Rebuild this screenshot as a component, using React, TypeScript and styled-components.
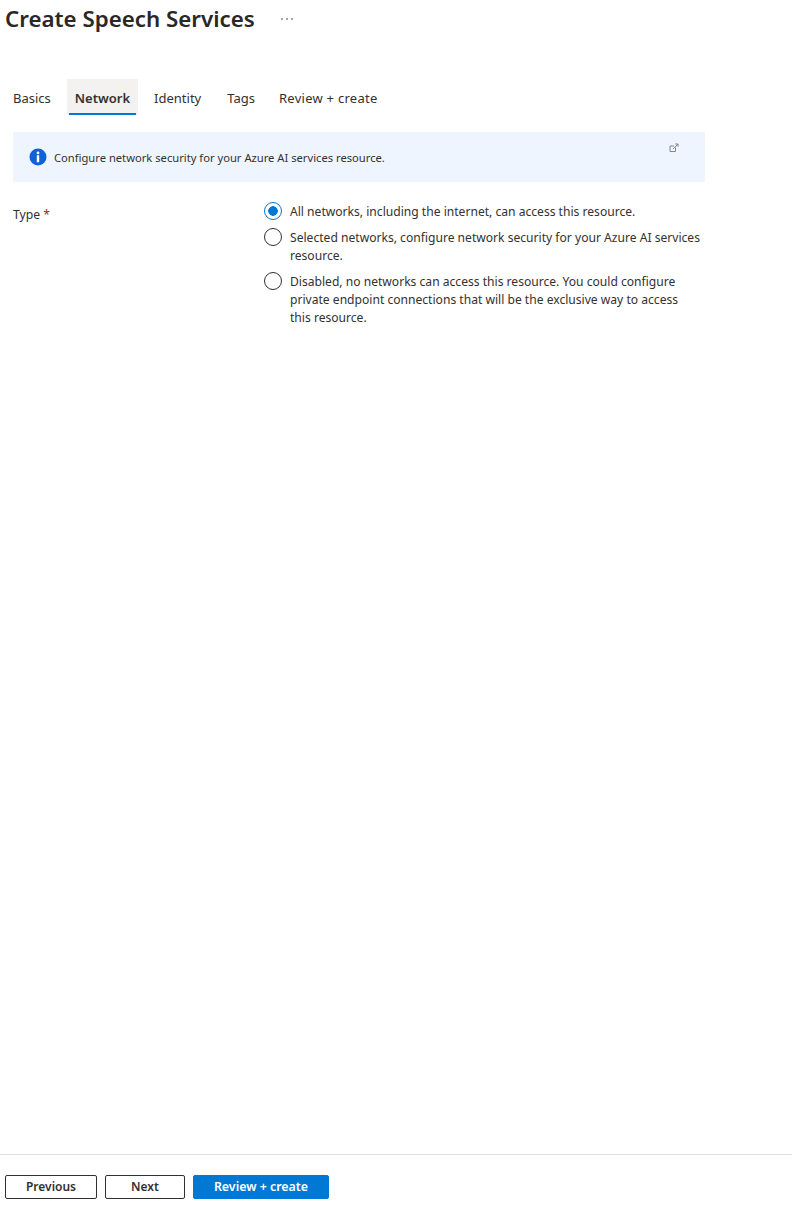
import React, { FC } from "react";
import styled, { createGlobalStyle } from "styled-components";

const GlobalStyle = createGlobalStyle`
  html, body {
    margin: 0;
    padding: 0;
    background: #fff;
  }
  body {
    font-family: "Noto Sans", "Open Sans", "Liberation Sans", sans-serif;
    color: #292827;
  }
`;

const tabs = [
  { label: "Basics", gap: 9, tracking: 0 },
  { label: "Network", gap: 9, tracking: 0 },
  { label: "Identity", gap: 12, tracking: 0 },
  { label: "Tags", gap: 10, tracking: 0 },
  { label: "Review + create", gap: 0, tracking: 0.27 },
];

const options = [
  {
    label: "All networks, including the internet, can access this resource.",
    checked: true,
  },
  {
    label:
      "Selected networks, configure network security for your Azure AI services resource.",
    checked: false,
  },
  {
    label:
      "Disabled, no networks can access this resource. You could configure private endpoint connections that will be the exclusive way to access this resource.",
    checked: false,
  },
];

const InfoIcon: FC = () => (
  <svg width="18" height="18" viewBox="0 0 18 18" aria-hidden="true">
    <circle cx="9" cy="9" r="8.5" fill="#0f62d6" />
    <circle cx="9" cy="4.9" r="1.4" fill="#fff" />
    <rect x="7.8" y="7.2" width="2.4" height="7" rx="0.4" fill="#fff" />
  </svg>
);

const ExternalIcon: FC = () => (
  <svg width="10" height="10" viewBox="0 0 10 10" fill="none" stroke="#7a7a7a" strokeWidth="0.9" aria-hidden="true">
    <path d="M6.5 4.5V8.5H1V3H5" />
    <path d="M4 6L9 1M6.2 1H9V3.8" />
  </svg>
);

const App: FC = () => {
  return (
    <Page>
      <GlobalStyle />
      <Main>
        <TitleRow>
          <Title>Create Speech Services</Title>
          <More>
            <Dot />
            <Dot />
            <Dot />
          </More>
        </TitleRow>
        <TabBar>
          {tabs.map((tab) => (
            <Tab
              key={tab.label}
              $active={tab.label === "Network"}
              $gap={tab.gap}
              $tracking={tab.tracking}
            >
              {tab.label}
            </Tab>
          ))}
        </TabBar>
        <Content>
          <InfoBanner>
            <InfoIcon />
            <InfoText>
              Configure network security for your Azure AI services resource.
            </InfoText>
            <ExternalLink>
              <ExternalIcon />
            </ExternalLink>
          </InfoBanner>
          <FormRow>
            <FieldLabel>
              Type <Required>*</Required>
            </FieldLabel>
            <RadioGroup>
              {options.map((option) => (
                <RadioRow key={option.label}>
                  <RadioCircle $checked={option.checked} />
                  <RadioText>{option.label}</RadioText>
                </RadioRow>
              ))}
            </RadioGroup>
          </FormRow>
        </Content>
      </Main>
      <Footer>
        <OutlineButton $width={92}>Previous</OutlineButton>
        <OutlineButton $width={80}>Next</OutlineButton>
        <PrimaryButton>Review + create</PrimaryButton>
      </Footer>
    </Page>
  );
};

export default App;

const Page = styled.div`
  display: flex;
  flex-direction: column;
  height: 1212px;
  overflow: hidden;
`;

const Main = styled.main`
  flex: 1;
`;

const TitleRow = styled.div`
  display: flex;
  align-items: center;
  height: 38px;
  padding-left: 5px;
`;

const Title = styled.h1`
  margin: 0;
  font-size: 22.3px;
  font-weight: 600;
  line-height: 38px;
  color: #292827;
`;

const More = styled.span`
  display: flex;
  gap: 3px;
  margin-left: 26px;
`;

const Dot = styled.span`
  width: 2px;
  height: 2px;
  border-radius: 50%;
  background: #8a8886;
`;

const TabBar = styled.div`
  display: flex;
  margin-top: 41px;
  padding-left: 6px;
  height: 36px;
`;

const Tab = styled.div<{ $active: boolean; $gap: number; $tracking: number }>`
  display: flex;
  align-items: center;
  position: relative;
  box-sizing: border-box;
  padding: 2px ${(props) => (props.$active ? "8px" : "7px")} 0;
  margin-right: ${(props) => props.$gap}px;
  font-size: 13px;
  font-weight: ${(props) => (props.$active ? 600 : 400)};
  letter-spacing: ${(props) => props.$tracking}px;
  color: #323130;
  background: ${(props) => (props.$active ? "#f3f2f1" : "transparent")};

  &::after {
    content: "";
    display: ${(props) => (props.$active ? "block" : "none")};
    position: absolute;
    left: 2px;
    right: 2px;
    bottom: 0;
    height: 2px;
    background: #0078d4;
  }
`;

const Content = styled.div`
  width: 692px;
  margin: 17px 0 0 13px;
`;

const InfoBanner = styled.div`
  display: flex;
  align-items: center;
  position: relative;
  height: 50px;
  padding-left: 16px;
  border-radius: 2px;
  background: #eef5fe;
`;

const InfoText = styled.span`
  margin-left: 7px;
  font-size: 11.2px;
  color: #323130;
`;

const ExternalLink = styled.span`
  position: absolute;
  top: 11px;
  right: 26px;
  line-height: 0;
`;

const FormRow = styled.div`
  display: flex;
  margin-top: 20px;
`;

const FieldLabel = styled.div`
  width: 251px;
  padding-top: 4px;
  font-size: 12.2px;
  line-height: 18px;
  color: #323130;
`;

const Required = styled.span`
  color: #a4262c;
`;

const RadioGroup = styled.div`
  display: flex;
  flex: 1;
  flex-direction: column;
  gap: 7px;
`;

const RadioRow = styled.div`
  display: flex;
  align-items: flex-start;
  gap: 8px;
`;

const RadioCircle = styled.span<{ $checked: boolean }>`
  flex: none;
  box-sizing: border-box;
  width: 18px;
  height: 18px;
  border-radius: 50%;
  border: 1px solid ${(props) => (props.$checked ? "#0078d4" : "#323130")};
  background: ${(props) =>
    props.$checked
      ? "radial-gradient(circle, #0078d4 0 4.5px, #fff 5px)"
      : "#fff"};
`;

const RadioText = styled.span`
  max-width: 411px;
  padding-top: 1px;
  font-size: 12.1px;
  line-height: 18px;
  color: #323130;
`;

const Footer = styled.footer`
  display: flex;
  gap: 8px;
  box-sizing: border-box;
  height: 58px;
  padding: 20px 0 0 5px;
  border-top: 1px solid #e1dfdd;
`;

const OutlineButton = styled.button<{ $width: number }>`
  box-sizing: border-box;
  width: ${(props) => props.$width}px;
  height: 24px;
  padding: 0 0 2px;
  border: 1px solid #323130;
  border-radius: 2px;
  background: #fff;
  color: #323130;
  font: 600 12px "Noto Sans", "Open Sans", sans-serif;
`;

const PrimaryButton = styled.button`
  box-sizing: border-box;
  width: 136px;
  height: 24px;
  padding: 0 0 2px;
  border: 1px solid #0078d4;
  border-radius: 2px;
  background: #0078d4;
  color: #fff;
  font: 600 12.4px "Noto Sans", "Open Sans", sans-serif;
`;
